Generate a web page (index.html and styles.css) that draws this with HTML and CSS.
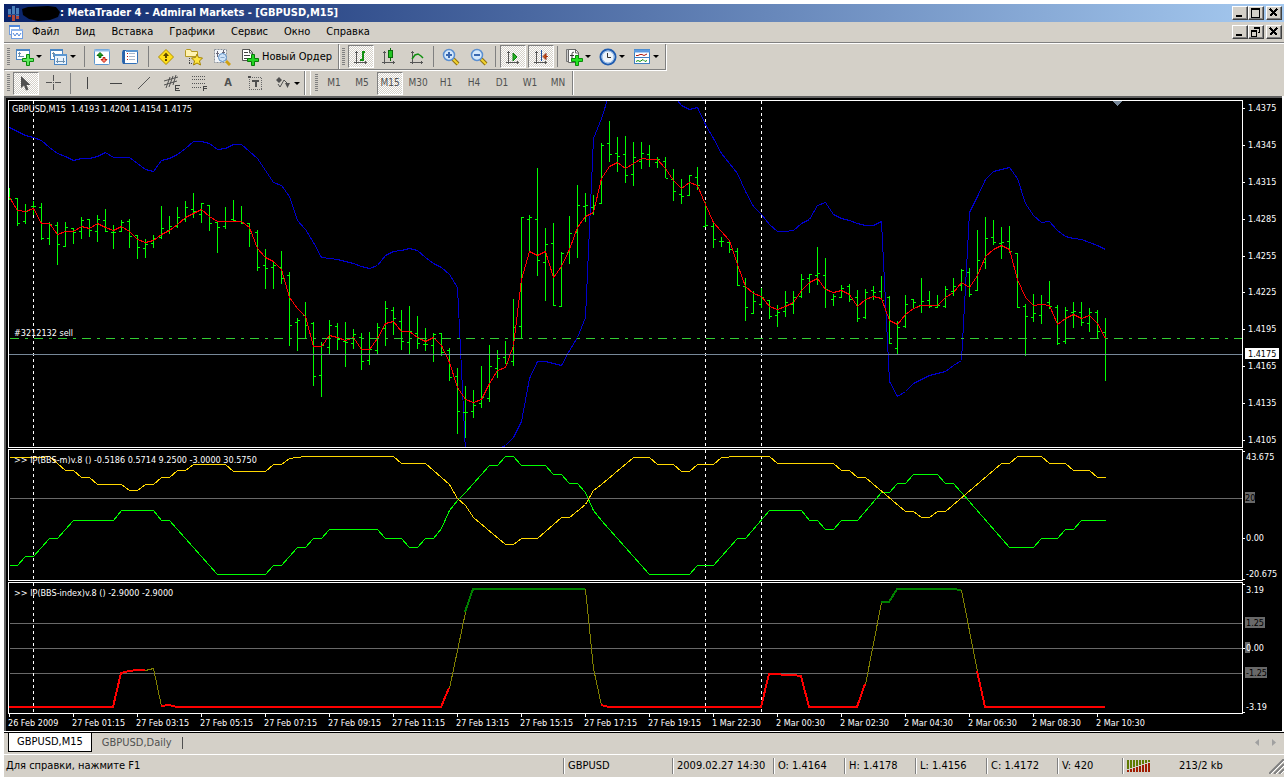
FILE: index.html
```html
<!DOCTYPE html>
<html lang="ru">
  <head>
    <meta charset="UTF-8" />
    <meta name="viewport" content="width=device-width, initial-scale=1.0" />
    <title>MetaTrader 4 - Admiral Markets - [GBPUSD,M15]</title>
    <link rel="stylesheet" href="styles.css">
  </head>
  <body>
    <!-- Title bar -->
    <header class="titlebar">
      <svg class="app-icon" width="60" height="18" viewBox="0 0 60 18">
        <path d="M5.500 5v6M9.500 2v8M13.500 4v8" stroke="#4a7fb8" stroke-width="3" />
        <path d="M5.500 11v2M9.500 10v7M13.500 12v3" stroke="#b04a3c" stroke-width="3" />
        <path d="M4 10.500h11" stroke="#2a4f8e" />
        <path d="M18 5l6-2 20-1 8 1 4 5-2 5-8 3-12 1-9-2-6-4z" fill="#000" />
      </svg>
      <h1>: MetaTrader 4 - Admiral Markets - [GBPUSD,M15]</h1>
      <div class="win-buttons">
        <button type="button" aria-label="Свернуть"><svg width="10" height="10"><path d="M1 8h6" stroke="#000" stroke-width="2" /></svg></button>
        <button type="button" aria-label="Развернуть"><svg width="10" height="10"><path d="M.5 1v8.500h8V1M0 1h9" stroke="#000" fill="none" /><path d="M0 1h9" stroke="#000" stroke-width="2" /></svg></button>
        <button type="button" class="close" aria-label="Закрыть"><svg width="10" height="10"><path d="M1 1l7 7M8 1l-7 7" stroke="#000" stroke-width="1.500" /></svg></button>
      </div>
    </header>

    <!-- Menu -->
    <nav class="menubar">
      <svg class="doc-icon" width="16" height="16" viewBox="0 0 16 16">
        <rect x="1.500" y="1.500" width="10" height="9" fill="#fff" stroke="#6f9de0" />
        <path d="M1 2h11" stroke="#4f86d8" stroke-width="2" />
        <path d="M3 7l2-2 2 2 2-2" stroke="#6f9de0" fill="none" />
        <rect x="3.500" y="5.500" width="11" height="9" fill="#fff" stroke="#6f9de0" />
        <path d="M3 6h12" stroke="#8fb4ea" stroke-width="2" />
        <path d="M5 9l2 3 2-3 2 3 2-3" stroke="#4f86d8" fill="none" />
      </svg>
      <button type="button">Файл</button>
      <button type="button">Вид</button>
      <button type="button">Вставка</button>
      <button type="button">Графики</button>
      <button type="button">Сервис</button>
      <button type="button">Окно</button>
      <button type="button">Справка</button>
      <div class="win-buttons">
        <button type="button" aria-label="Свернуть окно"><svg width="10" height="10"><path d="M1 8h6" stroke="#000" stroke-width="2" /></svg></button>
        <button type="button" aria-label="Восстановить окно"><svg width="10" height="10"><path d="M3.500 1v-.5h5v5h-2M.5 4v5.500h5V4M3 1h6M0 4h6" stroke="#000" fill="none" /><path d="M3 1h6M0 4h6" stroke="#000" stroke-width="2" /></svg></button>
        <button type="button" class="close" aria-label="Закрыть окно"><svg width="10" height="10"><path d="M1 1l7 7M8 1l-7 7" stroke="#000" stroke-width="1.500" /></svg></button>
      </div>
    </nav>

    <!-- Standard and chart toolbars -->
    <div class="toolbar-row">
      <div class="band">
        <span class="grip"></span>
        <button type="button" class="tool wide" aria-label="Новый график">
          <svg width="18" height="18" viewBox="0 0 18 18">
            <rect x=".5" y="1.500" width="13" height="10" fill="#fff" stroke="#4a86c4" />
            <path d="M0 2h14" stroke="#4a86c4" stroke-width="2" />
            <path d="M3.500 4v5M2 8.500h6M2 5.500h3" stroke="#6a8fb0" />
            <path d="M10.500 6.500h3v4h4v3h-4v4h-3v-4h-4v-3h4z" fill="#5fe85f" stroke="#0a8a0a" />
          </svg><i class="caret"></i>
        </button>
        <button type="button" class="tool wide" aria-label="Профили">
          <svg width="18" height="18" viewBox="0 0 18 18">
            <rect x=".5" y="1.500" width="12" height="10" fill="#fff" stroke="#4a86c4" />
            <path d="M0 2h13" stroke="#4a86c4" stroke-width="2" />
            <path d="M2 5.500h3M3.500 4v5" stroke="#6a8fb0" />
            <rect x="4.500" y="6.500" width="12" height="10" fill="#eaf3fc" stroke="#4a86c4" />
            <path d="M4 7h13" stroke="#5b96d0" stroke-width="2" />
            <path d="M6 13.500h9M7.500 10v5M13.500 10v5" stroke="#6a8fb0" />
          </svg><i class="caret"></i>
        </button>
        <span class="sep"></span>
        <button type="button" class="tool" aria-label="Обзор рынка">
          <svg width="18" height="18" viewBox="0 0 18 18">
            <rect x="1.500" y="1.500" width="15" height="15" rx="1" fill="#fff" stroke="#5b96d0" />
            <path d="M1 2.500h16" stroke="#8fbce8" stroke-width="2" />
            <path d="M7 4.500L10 7.500H8v2H6v-2H4z" fill="#1ea01e" stroke="#0b6b0b" />
            <path d="M11 14.500L8 11.500h2v-2h2v2h2z" fill="#ff8a70" stroke="#c01c10" />
          </svg>
        </button>
        <button type="button" class="tool" aria-label="Навигатор">
          <svg width="18" height="18" viewBox="0 0 18 18">
            <rect x="1.500" y="2.500" width="15" height="13" rx="1" fill="#fff" stroke="#2f6fb8" />
            <path d="M3 2v14" stroke="#2a62a8" stroke-width="2" />
            <path d="M5 3h12" stroke="#5b96d0" stroke-width="2" />
            <path d="M6.500 5v1M6.500 8v1M6.500 11v1" stroke="#c01c10" />
            <path d="M8 5.500h6M8 8.500h6M8 11.500h6" stroke="#a8b8cc" />
          </svg>
        </button>
        <span class="sep"></span>
        <button type="button" class="tool" aria-label="Терминал">
          <svg width="18" height="18" viewBox="0 0 18 18">
            <path d="M9 1.500L16.500 9 9 16.500 1.500 9z" fill="#ffdf1a" stroke="#b09000" />
            <path d="M9 4.500l3 3.500H6z" fill="#5b4700" />
            <path d="M9 7v3M9 11v2" stroke="#5b4700" stroke-width="2" />
          </svg>
        </button>
        <button type="button" class="tool" aria-label="Избранное">
          <svg width="20" height="18" viewBox="0 0 20 18">
            <path d="M1.500 8.500v-6l1-1h4l1 2h6v5z" fill="#fff3b0" stroke="#b69a20" />
            <path d="M5.500 10v5M5 15.500h3" stroke="#444" stroke-dasharray="1 1" />
            <path d="M13 6l1.500 3.500 4 .5-3 3 1 4-3.500-2-3.500 2 1-4-3-3 4-.5z" fill="#ffe640" stroke="#a58300" />
          </svg>
        </button>
        <button type="button" class="tool" aria-label="Тестер стратегий">
          <svg width="18" height="18" viewBox="0 0 18 18">
            <rect x="1.500" y="1.500" width="12" height="13" fill="#f3f6fa" stroke="#8a9099" stroke-dasharray="2 1" />
            <path d="M4.500 3v6M3 5.500h3M10.500 2v5M9 4.500h3" stroke="#667" />
            <path d="M13 13l4 4" stroke="#d0a010" stroke-width="3" />
            <circle cx="9.500" cy="9.500" r="4" fill="#cfe3f8" stroke="#5b8ec4" />
            <path d="M7.500 9.500h4" stroke="#89a9cc" />
          </svg>
        </button>
        <button type="button" class="tool order">
          <svg width="18" height="18" viewBox="0 0 18 18">
            <path d="M1.500 1.500h7l3 3v8h-10z" fill="#fff" stroke="#555" />
            <path d="M8.500 1v4h3" stroke="#555" fill="none" />
            <path d="M3 4.500h4M3 7.500h6M3 10.500h4" stroke="#444" />
            <path d="M10.500 6.500h3v4h4v3h-4v4h-3v-4h-4v-3h4z" fill="#22d422" stroke="#0a7a0a" />
          </svg>
          <span>Новый Ордер</span>
        </button>
      </div>
      <div class="band charts-band">
        <span class="grip"></span>
        <button type="button" class="tool pressed" aria-label="Бары" aria-pressed="true">
          <svg width="18" height="18" viewBox="0 0 18 18" class="crisp">
            <path d="M4.500 3v13M2 14.500h13M3 4.500h3M13.500 13v3" stroke="#555" />
            <path d="M11 3v10M11 4h2M8 12h3" stroke="#109010" stroke-width="2" />
          </svg>
        </button>
        <button type="button" class="tool" aria-label="Свечи">
          <svg width="18" height="18" viewBox="0 0 18 18" class="crisp">
            <path d="M4.500 3v13M2 14.500h13M3 4.500h3M13.500 13v3" stroke="#555" />
            <path d="M10.500 0v13" stroke="#0a6b0a" />
            <rect x="8.500" y="2.500" width="4" height="7" fill="#22c422" stroke="#0a6b0a" />
          </svg>
        </button>
        <button type="button" class="tool" aria-label="Линия">
          <svg width="18" height="18" viewBox="0 0 18 18">
            <path d="M4.500 3v13M2 14.500h13M3 4.500h3M13.500 13v3" stroke="#555" class="crisp" />
            <path d="M4 11l3-4 3-1 3 2 2 2" stroke="#109010" stroke-width="1.500" fill="none" />
          </svg>
        </button>
        <span class="sep"></span>
        <button type="button" class="tool" aria-label="Увеличить">
          <svg width="18" height="18" viewBox="0 0 18 18">
            <path d="M11 11l5 5" stroke="#8f7010" stroke-width="4" />
            <path d="M11 11l5 5" stroke="#f2d430" stroke-width="2" />
            <circle cx="7" cy="7" r="5.500" fill="#d4e8fb" stroke="#5b8fd0" stroke-width="1.500" />
            <path d="M4 7h6M7 4v6" stroke="#3a68b0" stroke-width="2" />
          </svg>
        </button>
        <button type="button" class="tool" aria-label="Уменьшить">
          <svg width="18" height="18" viewBox="0 0 18 18">
            <path d="M11 11l5 5" stroke="#8f7010" stroke-width="4" />
            <path d="M11 11l5 5" stroke="#f2d430" stroke-width="2" />
            <circle cx="7" cy="7" r="5.500" fill="#d4e8fb" stroke="#5b8fd0" stroke-width="1.500" />
            <path d="M4 7h6" stroke="#3a68b0" stroke-width="2" />
          </svg>
        </button>
        <span class="sep"></span>
        <button type="button" class="tool pressed" aria-label="Автопрокрутка" aria-pressed="true">
          <svg width="18" height="18" viewBox="0 0 18 18">
            <path d="M4.500 3v13M2 14.500h13M3 4.500h3M13.500 13v3" stroke="#555" class="crisp" />
            <path d="M9 5l4 4-4 4z" fill="#22b422" stroke="#0a7a0a" />
          </svg>
        </button>
        <button type="button" class="tool pressed" aria-label="Сдвиг графика" aria-pressed="true">
          <svg width="18" height="18" viewBox="0 0 18 18">
            <path d="M4.500 3v13M2 14.500h13M3 4.500h3M13.500 13v3" stroke="#555" class="crisp" />
            <path d="M9.500 2v11" stroke="#1c4fa0" class="crisp" />
            <path d="M16 8.500h-4" stroke="#b03010" />
            <path d="M11 8.500l3-3v6z" fill="#d06010" stroke="#902010" />
          </svg>
        </button>
        <span class="sep"></span>
        <button type="button" class="tool wide" aria-label="Индикаторы">
          <svg width="18" height="18" viewBox="0 0 18 18">
            <path d="M1.500 1.500h3v12h-3z" fill="#ccc" stroke="#777" />
            <path d="M3.500 1.500h7l3 3v10h-10z" fill="#fff" stroke="#666" />
            <path d="M10.500 1v4h3" stroke="#666" fill="none" />
            <path d="M9 4.500c-2-1-2 1-2 3v4M5 7.500h4" stroke="#333" fill="none" />
            <path d="M10.500 7.500h3v3h4v3h-4v4h-3v-4h-4v-3h4z" fill="#22e422" stroke="#0a8a0a" />
          </svg><i class="caret"></i>
        </button>
        <button type="button" class="tool wide" aria-label="Периоды">
          <svg width="18" height="18" viewBox="0 0 18 18">
            <circle cx="9" cy="9" r="7.500" fill="#eef4fa" stroke="#1f5cb0" stroke-width="2" />
            <circle cx="9" cy="9" r="6" fill="none" stroke="#8fb8e8" />
            <path d="M8.500 5v4.500H12" stroke="#333" fill="none" />
          </svg><i class="caret"></i>
        </button>
        <button type="button" class="tool wide" aria-label="Шаблоны">
          <svg width="18" height="18" viewBox="0 0 18 18">
            <rect x="1.500" y="1.500" width="15" height="14" fill="#fff" stroke="#3f7fc0" />
            <path d="M1 3h16" stroke="#5b9ae0" stroke-width="3" />
            <path d="M1 9.500h16" stroke="#3f7fc0" />
            <path d="M3 7.500h2l2-1h2l2 1 3-1.500" stroke="#b01c10" fill="none" />
            <path d="M3 13.500l2-1 2 1 3-2 2 2 2-1" stroke="#109010" fill="none" />
          </svg><i class="caret"></i>
        </button>
      </div>
    </div>

    <!-- Drawing tools and timeframes -->
    <div class="toolbar-row lines-row">
      <div class="band">
        <span class="grip"></span>
        <button type="button" class="tool pressed" aria-label="Курсор" aria-pressed="true">
          <svg width="18" height="18" viewBox="0 0 18 18"><path d="M4 2v12l3-2.500 2 5 2.500-1-2-4.500h4z" fill="#505050" /></svg>
        </button>
        <button type="button" class="tool" aria-label="Перекрестие">
          <svg width="18" height="18" class="crisp"><path d="M8.500 1v6M8.500 10v6M1 8.500h6M10 8.500h6M8 8.500h1" stroke="#555" /></svg>
        </button>
        <span class="sep"></span>
        <button type="button" class="tool" aria-label="Вертикальная линия">
          <svg width="18" height="18" class="crisp"><path d="M8.500 3v12" stroke="#444" /></svg>
        </button>
        <button type="button" class="tool" aria-label="Горизонтальная линия">
          <svg width="18" height="18" class="crisp"><path d="M3 9.500h12" stroke="#444" /></svg>
        </button>
        <button type="button" class="tool" aria-label="Трендовая линия">
          <svg width="18" height="18"><path d="M3 15L15 3" stroke="#555" /></svg>
        </button>
        <button type="button" class="tool" aria-label="Равноудаленный канал">
          <svg width="18" height="18" viewBox="0 0 18 18">
            <path d="M1 7l14-4M1 11l13-4M3 14L7 3M6 13l4-11M10 11l3-10" stroke="#505050" />
            <path d="M16.500 11.500h-4v5h4M12 14.500h4" stroke="#444" fill="none" class="crisp" />
          </svg>
        </button>
        <button type="button" class="tool" aria-label="Линии Фибоначчи">
          <svg width="18" height="18" viewBox="0 0 18 18" class="crisp">
            <path d="M1 2.500h14M1 5.500h14M1 9.500h14M1 13.500h10" stroke="#555" stroke-dasharray="1 1" />
            <path d="M16 12.500h-3.500V17M13 14.500h3" stroke="#444" fill="none" />
          </svg>
        </button>
        <button type="button" class="tool letter" aria-label="Текст">A</button>
        <button type="button" class="tool" aria-label="Текстовая метка">
          <svg width="18" height="18" viewBox="0 0 18 18" class="crisp">
            <rect x="2.500" y="3.500" width="12" height="12" fill="none" stroke="#666" stroke-dasharray="1 1" />
            <path d="M5 7h7M8.500 7v6M1 3h3" stroke="#505050" stroke-width="2" />
          </svg>
        </button>
        <button type="button" class="tool wide" aria-label="Стрелки">
          <svg width="18" height="18" viewBox="0 0 18 18">
            <path d="M5 3l3 3-3 3-3-3zM11 9h5l-2.500 5z" fill="#505050" />
            <path d="M4 10l2 3 4-7 3 3" stroke="#505050" fill="none" />
          </svg><i class="caret"></i>
        </button>
      </div>
      <div class="band periods">
        <span class="grip"></span>
        <button type="button" class="tool">M1</button>
        <button type="button" class="tool">M5</button>
        <button type="button" class="tool pressed" aria-pressed="true">M15</button>
        <button type="button" class="tool">M30</button>
        <button type="button" class="tool">H1</button>
        <button type="button" class="tool">H4</button>
        <button type="button" class="tool">D1</button>
        <button type="button" class="tool">W1</button>
        <button type="button" class="tool">MN</button>
      </div>
    </div>

    <!-- Chart window -->
    <main class="chart-window">
      <div class="pane pane-price">
        <svg class="plot" id="pricePlot">
          <text x="3" y="11">GBPUSD,M15&nbsp; 1.4193 1.4204 1.4154 1.4175</text>
          <path class="order-line" d="M1 237.500H4000" />
          <path class="bid-line" d="M0 253.500H4000" />
          <path d="M1104 0h9l-4.500 5z" fill="#778899" />
          <text x="5" y="235">#3212132 sell</text>
        </svg>
        <svg class="scale">
          <path d="M0 8.500h2M0 45.500h2M0 82.500h2M0 119.500h2M0 156.500h2M0 192.500h2M0 229.500h2M0 266.500h2M0 303.500h2M0 340.500h2" stroke="#fff" />
          <text x="5" y="11">1.4375</text>
          <text x="5" y="48">1.4345</text>
          <text x="5" y="85">1.4315</text>
          <text x="5" y="122">1.4285</text>
          <text x="5" y="159">1.4255</text>
          <text x="5" y="195">1.4225</text>
          <text x="5" y="232">1.4195</text>
          <text x="5" y="269">1.4165</text>
          <text x="5" y="306">1.4135</text>
          <text x="5" y="343">1.4105</text>
          <rect x="2" y="248" width="34" height="11" fill="#fff" />
          <text x="5" y="257" class="dark">1.4175</text>
        </svg>
      </div>

      <div class="pane">
        <svg class="plot" id="bandsPlot">
          <path class="level" d="M1 48.500H4000" />
          <text x="5" y="13">&gt;&gt; IP(BBS-m)v.8 () -0.5186 0.5714 9.2500 -3.0000 30.5750</text>
        </svg>
        <svg class="scale">
          <path d="M0 2.500h2M0 89.500h2M0 130.500h2" stroke="#fff" />
          <text x="3" y="11">43.675</text>
          <rect x="2" y="43" width="10" height="11" fill="#696969" />
          <text x="2" y="52" class="dark">20</text>
          <text x="3" y="92">0.00</text>
          <text x="3" y="128">-20.675</text>
        </svg>
      </div>

      <div class="pane">
        <svg class="plot" id="indexPlot">
          <path class="level" d="M1 40.500H4000M1 65.500H4000M1 90.500H4000" />
          <text x="5" y="13">&gt;&gt; IP(BBS-index)v.8 () -2.9000 -2.9000</text>
        </svg>
        <svg class="scale">
          <path d="M0 2.500h2M0 66.500h2M0 130.500h2" stroke="#fff" />
          <text x="3" y="11">3.19</text>
          <rect x="2" y="35" width="20" height="11" fill="#696969" />
          <text x="3" y="44" class="dark">1.25</text>
          <rect x="2" y="60" width="5" height="11" fill="#696969" />
          <text x="3" y="69">0.00</text>
          <rect x="2" y="85" width="22" height="11" fill="#696969" />
          <text x="3" y="94" class="dark">-1.25</text>
          <text x="3" y="128">-3.19</text>
        </svg>
      </div>

      <svg class="time-axis" id="timeAxis">
        <text x="-1" y="12">26 Feb 2009</text>
        <text x="63" y="12">27 Feb 01:15</text>
        <text x="127" y="12">27 Feb 03:15</text>
        <text x="191" y="12">27 Feb 05:15</text>
        <text x="255" y="12">27 Feb 07:15</text>
        <text x="319" y="12">27 Feb 09:15</text>
        <text x="383" y="12">27 Feb 11:15</text>
        <text x="447" y="12">27 Feb 13:15</text>
        <text x="511" y="12">27 Feb 15:15</text>
        <text x="575" y="12">27 Feb 17:15</text>
        <text x="639" y="12">27 Feb 19:15</text>
        <text x="703" y="12">1 Mar 22:30</text>
        <text x="767" y="12">2 Mar 00:30</text>
        <text x="831" y="12">2 Mar 02:30</text>
        <text x="895" y="12">2 Mar 04:30</text>
        <text x="959" y="12">2 Mar 06:30</text>
        <text x="1023" y="12">2 Mar 08:30</text>
        <text x="1087" y="12">2 Mar 10:30</text>
      </svg>
    </main>

    <!-- Chart tabs -->
    <div class="tabs">
      <button type="button" class="tab active">GBPUSD,M15</button>
      <button type="button" class="tab">GBPUSD,Daily</button>
      <span class="tab-end"></span>
      <div class="tab-scroll">
        <button type="button" aria-label="Назад"><svg width="4" height="7"><path d="M4 0v7L0 3.500z" fill="#a0a0a0" /></svg></button>
        <button type="button" aria-label="Вперед"><svg width="4" height="7"><path d="M0 0v7l4-3.500z" fill="#a0a0a0" /></svg></button>
      </div>
    </div>

    <!-- Status bar -->
    <footer class="statusbar">
      <span class="help">Для справки, нажмите F1</span>
      <span class="cell symbol">GBPUSD</span>
      <span class="cell date">2009.02.27 14:30</span>
      <span class="cell">O: 1.4164</span>
      <span class="cell">H: 1.4178</span>
      <span class="cell">L: 1.4156</span>
      <span class="cell">C: 1.4172</span>
      <span class="cell volume">V: 420</span>
      <span class="cell traffic">
        <svg width="24" height="12" class="crisp">
          <path d="M1 0v9M4 0v8M7 0v7M10 0v6M13 0v5M16 0v4M19 0v3M22 0v2" stroke="#5f7a00" stroke-width="2" />
          <path d="M1 10v2M4 9v3M7 8v4M10 7v5M13 6v6M16 5v7M19 4v8M22 3v9" stroke="#a01c00" stroke-width="2" />
        </svg>
        <span>213/2 kb</span>
        <svg class="resize" width="15" height="15">
          <path d="M0 15L15 0M5 15L15 5M10 15l5-5" stroke="#808080" stroke-width="2" />
          <path d="M2 15L15 2M7 15l8-8M12 15l3-3" stroke="#fff" />
        </svg>
      </span>
    </footer>

    <script src="chart.js"></script>
  </body>
</html>
```
FILE: styles.css
```css
/* Global */
* {
  box-sizing: border-box;
}

body {
  margin: 0;
  padding: 4px 4px 0;
  min-height: 100vh;
  display: flex;
  flex-direction: column;
  background-color: #fff;
  color: #000;
  font-family: Tahoma, "DejaVu Sans Condensed", "DejaVu Sans", sans-serif;
  font-size: 11px;
  line-height: 14px;
}

button {
  font: inherit;
  color: inherit;
  margin: 0;
  padding: 0;
  border: none;
  background: none;
}

svg {
  display: block;
  flex: none;
}

.crisp {
  shape-rendering: crispEdges;
}

/* Title bar */
.titlebar {
  display: flex;
  align-items: center;
  height: 18px;
  background: linear-gradient(to right, #0a246a, #a6caf0);
}

.titlebar h1 {
  margin: 0 auto 0 -4px;
  color: #fff;
  font-size: 11px;
  font-weight: bold;
  white-space: nowrap;
}

.win-buttons {
  display: flex;
  margin-left: auto;
  padding-right: 2px;
}

.win-buttons button {
  display: flex;
  align-items: center;
  justify-content: center;
  width: 16px;
  height: 14px;
  background-color: #d4d0c8;
  border: 1px solid;
  border-color: #fff #404040 #404040 #fff;
  box-shadow: inset -1px -1px #808080;
}

.win-buttons .close {
  margin-left: 2px;
}

.win-buttons svg {
  shape-rendering: crispEdges;
}

/* Menu */
.menubar {
  display: flex;
  align-items: center;
  height: 21px;
  padding-left: 4px;
  background-color: #d4d0c8;
  border-bottom: 1px solid #808080;
}

.menubar > button {
  padding: 0 8px;
}

/* Toolbars */
.toolbar-row {
  display: flex;
  height: 28px;
  background-color: #d4d0c8;
  border-top: 1px solid #fff;
}

.lines-row {
  height: 25px;
  border-top: none;
}

.band {
  display: flex;
  align-items: center;
  padding: 0 2px;
  border-right: 1px solid #808080;
  border-bottom: 1px solid #808080;
  box-shadow: 1px 1px #fff;
}

.lines-row .band {
  padding-right: 0;
  border-bottom: none;
  box-shadow: 1px 0 #fff;
}

.toolbar-row .band {
  margin-bottom: 1px;
}

.toolbar-row .charts-band {
  padding: 0 2px;
}

.grip {
  width: 3px;
  height: 18px;
  margin: 0 2px 0 1px;
  background: repeating-linear-gradient(#808080 0 1px, transparent 1px 2px);
}

.sep {
  width: 2px;
  height: 21px;
  margin: 0 2px 0 4px;
  border-left: 1px solid #808080;
}

.charts-band .sep,
.lines-row .sep {
  margin: 0 2px;
}

.tool {
  display: flex;
  align-items: center;
  justify-content: center;
  width: 26px;
  height: 23px;
  margin: 0 1px;
  color: #505050;
}

.wide {
  width: 32px;
}

.order {
  width: auto;
  padding: 0 3px 0 4px;
  gap: 3px;
  color: #000;
}

.letter {
  font-weight: bold;
}

.pressed {
  background: repeating-conic-gradient(#fff 0 25%, #d4d0c8 0 50%) 0 0 / 2px 2px;
  border: 1px solid;
  border-color: #808080 #fff #fff #808080;
}

.caret {
  margin-left: 2px;
  border: 3px solid transparent;
  border-top-color: #000;
  border-bottom: none;
}

.toolbar-row .periods {
  margin-left: 5px;
  padding-left: 3px;
  border-left: 1px solid #fff;
  font-size: 10px;
}

/* Chart window */
.chart-window {
  flex: 1;
  display: flex;
  flex-direction: column;
  margin-right: 2px;
  padding: 2px 0 0 2px;
  background-color: #000;
  border-top: 2px solid #606060;
  border-left: 2px solid #606060;
  font-size: 9px;
}

.chart-window text {
  fill: #fff;
}

.chart-window .dark {
  fill: #000;
}

.pane {
  display: grid;
  grid-template-columns: minmax(0, 1fr) 39px;
  height: 132px;
  margin-bottom: 1px;
}

.pane-price {
  flex: 1;
  min-height: 348px;
}

.pane:nth-of-type(3) {
  margin-bottom: 0;
}

.plot {
  width: 100%;
  height: 100%;
  border: 1px solid #fff;
  overflow: hidden;
}

.plot path,
.scale path,
.time-axis path {
  shape-rendering: crispEdges;
}

.scale {
  width: 100%;
  height: 100%;
}

.level {
  stroke: #696969;
}

.order-line {
  stroke: #32cd32;
  stroke-dasharray: 9 6 3 6;
}

.bid-line {
  stroke: #778899;
}

.bars {
  stroke: #00ff00;
  fill: none;
}

.day-line {
  stroke: #fff;
  stroke-dasharray: 3 3;
}

.curve {
  fill: none;
}

.time-axis {
  width: 100%;
  height: 17px;
  padding-left: 1px;
  overflow: visible;
}

/* Chart tabs */
.tabs {
  display: flex;
  height: 22px;
  margin-top: 1px;
  padding: 0 8px 2px 4px;
  background-color: #d4d0c8;
  border-top: 1px solid #000;
  box-shadow: 0 -1px #fff;
}

.tab {
  padding: 0 10px;
  color: #505050;
}

.tab.active {
  padding: 0 8px;
  color: #000;
  background-color: #fff;
  border: 1px solid #000;
  border-top: none;
}

.tab-end {
  align-self: center;
  width: 1px;
  height: 12px;
  background-color: #505050;
}

.tab-scroll {
  display: flex;
  gap: 13px;
  margin-left: auto;
}

/* Status bar */
.statusbar {
  display: flex;
  align-items: center;
  height: 24px;
  padding-bottom: 1px;
  background-color: #d4d0c8;
  border-top: 1px solid #fff;
  box-shadow: inset 0 -1px #fff;
  white-space: nowrap;
}

.help {
  flex: 1;
  padding-left: 2px;
}

.cell {
  width: 71px;
  height: 16px;
  padding-left: 4px;
  line-height: 16px;
  border-left: 1px solid #808080;
  box-shadow: inset 1px 0 #fff;
}

.symbol {
  width: 109px;
}

.date {
  width: 101px;
}

.volume {
  width: 65px;
}

.traffic {
  display: flex;
  align-items: center;
  gap: 28px;
  width: 162px;
}

.resize {
  margin-left: auto;
}
```
FILE: chart.js
```js
const STEP = 8; // pixels per bar
const SVG_NS = "http://www.w3.org/2000/svg";

// [high, low, open, close] of every bar, measured down from the top of the pane
const bars = [
  [87,99,98,98],[97,125,97,122],[103,123,120,110],[100,114,105,105],[102,139,106,137],
  [121,144,137,123],[121,164,124,143],[121,146,145,126],[127,143,127,131],[116,138,130,119],
  [118,136,118,129],[114,141,130,118],[108,131,119,130],[124,148,131,131],[119,131,130,121],
  [118,147,120,135],[134,158,134,146],[138,157,147,143],[134,147,142,137],[105,138,136,127],
  [115,133,129,125],[106,127,125,116],[100,121,118,106],[92,117,108,110],[102,122,113,102],
  [104,130,104,122],[121,152,121,126],[106,128,125,120],[99,120,118,119],[105,123,120,122],
  [122,146,122,132],[129,170,131,166],[148,188,164,167],[160,188,166,164],[150,183,166,177],
  [171,245,174,224],[217,250,221,219],[201,238,214,224],[221,285,222,275],[241,296,274,244],
  [219,254,246,224],[222,249,225,238],[221,266,240,241],[228,248,242,233],[232,269,236,260],
  [231,264,259,248],[222,253,249,226],[200,245,227,207],[206,234,209,217],[209,249,220,240],
  [205,254,241,230],[215,248,232,242],[227,250,243,243],[232,261,244,233],[232,255,232,251],
  [247,280,249,276],[267,333,275,310],[285,337,311,311],[289,317,310,304],[265,307,302,296],
  [244,301,297,265],[249,277,267,257],[240,263,256,262],[198,265,260,226],[116,238,225,116],
  [114,150,118,116],[67,175,118,159],[127,200,161,143],[122,205,142,204],[151,206,205,152],
  [115,163,151,132],[84,157,131,104],[92,121,105,104],[94,114,106,104],[42,103,102,44],
  [20,61,42,53],[36,71,52,55],[35,82,53,74],[41,85,73,56],[41,68,60,52],
  [44,66,53,58],[56,67,61,58],[56,77,60,77],[68,100,78,90],[78,103,93,95],
  [74,95,94,74],[66,89,76,84],[101,126,125,124],[121,147,125,138],[136,146,140,140],
  [140,152,141,148],[147,185,150,184],[177,220,185,206],[190,213,212,200],[187,207,203,196],
  [199,218,199,215],[204,226,214,211],[190,216,210,201],[190,213,203,196],[173,197,195,178],
  [173,192,177,173],[146,184,174,172],[157,207,174,188],[193,205,198,195],[184,197,196,187],
  [183,201,185,198],[189,221,196,217],[188,218,216,191],[185,199,189,191],[175,199,190,199],
  [195,243,196,242],[220,253,247,226],[194,227,225,203],[198,207,198,201],[177,212,204,200],
  [190,207,199,205],[194,207,206,204],[185,207,205,188],[177,195,190,185],[168,190,184,169],
  [167,196,171,193],[129,190,189,159],[116,168,161,137],[119,144,136,141],[126,158,142,141],
  [125,152,140,150],[152,207,152,206],[203,255,205,215],[193,221,216,212],[194,223,214,203],
  [180,208,201,205],[204,244,206,242],[206,243,240,209],[201,227,211,210],[201,225,211,221],
  [207,231,222,211],[209,238,211,230],[217,280,231,253]
];

// One value per bar
const average = [
  96,109,110,107,122,122,133,130,130,125,127,122,126,129,125,130,138,141,139,133,
  129,123,116,112,108,115,120,120,120,120,126,147,156,160,168,196,207,215,245,245,
  234,236,239,236,248,248,237,222,220,230,230,236,240,236,244,261,286,298,301,298,
  282,269,266,244,178,150,154,150,176,165,148,126,115,111,77,65,61,67,62,57,
  58,58,67,79,87,81,84,103,121,130,139,163,185,192,195,205,208,205,201,189,
  181,177,188,191,189,193,205,198,195,197,219,223,213,207,204,204,204,196,191,181,
  186,174,155,148,144,148,178,196,204,203,204,223,217,213,217,214,222,237
];

const stops = [
  26,30,34,36,39,46,52,55,59,57,57,55,51,56,56,56,62,68,70,59,
  57,53,47,40,40,42,48,47,43,43,50,57,69,81,84,95,119,128,141,156,
  157,158,160,162,165,167,164,154,150,149,147,149,156,162,166,173,186,350,360,360,
  360,348,344,336,320,277,260,260,262,264,249,236,216,37,17,-8,-20,-20,-20,-20,
  -20,-20,-20,-6,4,8,6,23,37,52,62,72,90,105,113,123,130,130,129,122,
  118,104,101,113,117,119,122,124,124,120,280,295,290,282,278,274,272,270,264,259,
  111,95,78,70,68,66,77,102,114,121,120,129,135,137,138,141,144,148
];

// [bar, y] break points
const gold = [
  [0,7],[4,7],[5,6],[7,20],[8,20],[9,27],[10,27],[11,34],[14,34],[15,40],[16,40],[17,34],[18,34],
  [19,27],[20,27],[21,20],[22,20],[23,14],[27,14],[28,21],[32,21],[33,14],[34,14],[35,8],[37,6],
  [48,6],[49,13],[52,13],[55,34],[56,48],[57,55],[58,67],[62,94],[63,94],[64,88],[66,88],[69,67],
  [70,67],[72,54],[73,40],[74,34],[78,7],[80,7],[81,14],[83,14],[84,21],[85,21],[86,14],[88,14],
  [89,7],[91,6],[95,6],[96,13],[103,13],[104,20],[105,20],[106,27],[107,27],[112,61],[113,61],
  [114,67],[115,67],[116,61],[117,61],[124,13],[125,13],[126,6],[129,6],[130,13],[132,13],
  [133,20],[135,20],[136,27],[137,27]
];

const lime = [
  [0,115],[1,115],[2,106],[3,106],[5,88],[6,88],[8,70],[13,70],[14,60],[18,60],[19,70],[20,70],
  [26,124],[32,124],[33,115],[34,115],[36,97],[37,97],[38,88],[39,88],[40,79],[46,79],[47,88],
  [49,88],[50,97],[51,97],[52,88],[53,88],[54,78],[55,60],[56,50],[57,42],[60,15],[61,15],[62,6],
  [63,6],[64,15],[67,15],[68,24],[69,24],[70,33],[71,33],[72,42],[73,60],[74,70],[80,124],
  [85,124],[86,115],[88,115],[91,88],[92,88],[95,60],[99,60],[100,70],[101,70],[102,79],[103,79],
  [104,70],[106,70],[109,42],[110,42],[111,33],[112,33],[113,24],[116,24],[117,33],[118,33],
  [119,42],[125,97],[128,97],[129,88],[131,88],[132,79],[133,79],[134,70],[137,70]
];

const indexParts = [
  ["olive", [[17,87],[18,85],[19,123]]],
  ["olive", [[55,105],[57,29]]],
  ["olive", [[72,6],[73,85],[74,122]]],
  ["olive", [[107,101],[109,19]]],
  ["olive", [[119,7],[121,88]]],
  ["red", [[0,124],[13,124],[14,90],[15,88],[16,87],[17,87]]],
  ["red", [[19,123],[20,122],[21,124],[54,124],[55,105]]],
  ["green", [[57,29],[58,6],[72,6]]],
  ["red", [[74,122],[75,124],[94,124],[95,91],[98,92],[99,93],[100,124],[106,124],[107,101]]],
  ["green", [[109,19],[110,19],[111,6],[118,6],[119,7]]],
  ["red", [[121,88],[122,124],[137,124]]]
];

function addPath(svg, d, className, color, width) {
  const path = document.createElementNS(SVG_NS, "path");
  path.setAttribute("d", d);
  path.setAttribute("class", className);
  if (color) path.setAttribute("stroke", color);
  if (width) path.setAttribute("stroke-width", width);
  svg.insertBefore(path, svg.querySelector("text"));
}

// Odd line widths sit on the half pixel, even ones on the whole pixel
function toPath(points, shift = 0.5) {
  return "M" + points.map(([i, y]) => `${i * STEP + shift} ${y + shift}`).join("L");
}

const pricePlot = document.getElementById("pricePlot");
const bandsPlot = document.getElementById("bandsPlot");
const indexPlot = document.getElementById("indexPlot");

// Day separators
[pricePlot, bandsPlot, indexPlot].forEach((svg) => {
  addPath(svg, "M24.5 0V2000M696.5 0V2000M752.5 0V2000", "day-line");
});

// Price pane
addPath(pricePlot, toPath(stops.map((y, i) => [i, y])), "curve", "#0000cd");
addPath(
  pricePlot,
  bars
    .map(([high, low, open, close], i) => {
      const x = i * STEP;
      return `M${x + 0.5} ${high}V${low}M${x - 2} ${open + 0.5}h2M${x + 1} ${close + 0.5}h2`;
    })
    .join(""),
  "bars"
);
addPath(pricePlot, toPath(average.map((y, i) => [i, y])), "curve", "#ff0000");

// Indicator panes
addPath(bandsPlot, toPath(lime), "curve", "#00ff00");
addPath(bandsPlot, toPath(gold), "curve", "#ffd700");
indexParts.forEach(([color, points]) => {
  const thin = color === "olive";
  addPath(indexPlot, toPath(points, thin ? 0.5 : 0), "curve", color, thin ? 1 : 2);
});

// Time axis ticks, one per 8 bars
let ticks = "";
for (let i = 0; i < 18; i++) {
  ticks += `M${i * 64 + 0.5} 0v3`;
}
addPath(document.getElementById("timeAxis"), ticks, "", "#fff");
```
